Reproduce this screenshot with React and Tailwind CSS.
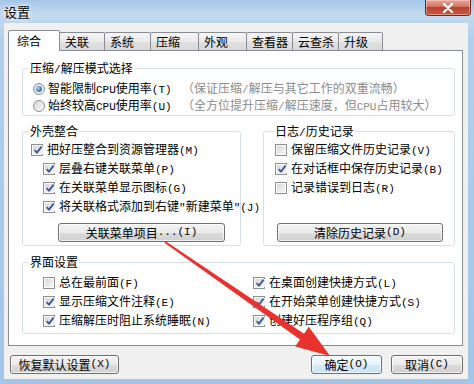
import React from "react";

function T({ text }) {
  const parts = text.split(/([\x21-\x7e]+)/);
  return (
    <>
      {parts.map((p, i) =>
        /^[\x21-\x7e]+$/.test(p) ? (
          <span key={i} className="font-['Liberation_Mono',monospace] text-[11px]">
            {p}
          </span>
        ) : (
          <React.Fragment key={i}>{p}</React.Fragment>
        )
      )}
    </>
  );
}

function Check({ checked }) {
  return (
    <span className="w-[12px] h-[12px] shrink-0 border border-[#8e8f8f] bg-white p-px flex">
      <span className="flex-1 flex items-center justify-center bg-[linear-gradient(135deg,#d5d8dd,#f7f7f7)]">
        {checked && (
          <svg width="10" height="10" viewBox="0 0 10 10">
            <path d="M1.6 5.2 L4 7.6 L8.6 1.6" stroke="#3d5a95" strokeWidth="1.9" fill="none" />
          </svg>
        )}
      </span>
    </span>
  );
}

function Radio({ checked }) {
  return (
    <span className="w-[12px] h-[12px] shrink-0 rounded-full border border-[#8e8f8f] bg-[linear-gradient(135deg,#d3d6db,#fafafa)] flex items-center justify-center">
      {checked && (
        <span className="w-[6px] h-[6px] rounded-full bg-[radial-gradient(circle_at_35%_35%,#a9d6f7,#2a6cae_70%)]" />
      )}
    </span>
  );
}

function Btn({ children, className = "", def = false }) {
  return (
    <div
      className={
        "h-[19px] rounded-[3px] border flex items-center justify-center text-[12px] leading-none shadow-[inset_0_0_0_1px_rgba(255,255,255,0.7)] " +
        (def
          ? "border-[#3c7fb1] bg-[linear-gradient(#f4fafe,#e6f3fb_50%,#d5ebf8_50%,#c6e3f5)] "
          : "border-[#707070] bg-[linear-gradient(#f2f2f2,#ebebeb_50%,#dddddd_50%,#cfcfcf)] ") +
        className
      }
    >
      {children}
    </div>
  );
}

function Row({ checked, text, indent = "" }) {
  return (
    <div className={"flex items-center h-[19px] " + indent}>
      <Check checked={checked} />
      <span className="ml-[4px] whitespace-nowrap">
        <T text={text} />
      </span>
    </div>
  );
}

function Group({ title, titleLeft, className, children }) {
  return (
    <div className={"relative border border-[#d5dfe5] rounded-[3px] " + className}>
      <span className={"absolute -top-[8px] px-px bg-white leading-[14px] whitespace-nowrap " + titleLeft}>
        <T text={title} />
      </span>
      {children}
    </div>
  );
}

export default function App() {
  const tabs = [
    ["关联", "w-[46px]"],
    ["系统", "w-[47px]"],
    ["压缩", "w-[49px]"],
    ["外观", "w-[49px]"],
    ["查看器", "w-[47px]"],
    ["云查杀", "w-[47px]"],
    ["升级", "w-[45px]"],
  ];
  return (
    <div className="relative w-[474px] h-[384px] overflow-hidden flex flex-col bg-[linear-gradient(180deg,#a3c6e8,#c2d9ef_14px,#b3cfea_40px,#a5c5e5)] font-['Noto_Sans_CJK_SC','Noto_Sans',sans-serif] text-[12px] text-black">
      {/* title bar */}
      <div className="h-[23px] flex items-start justify-between shrink-0">
        <span className="pl-[4px] pt-[3px] text-[13px] leading-[17px] [text-shadow:0_0_6px_#fff,0_0_3px_#fff]">设置</span>
        <div className="mr-[3px] w-[46px] h-[16px] rounded-b-[4px] border border-t-0 border-[#6d2a22] bg-[linear-gradient(#e9a99c,#d0705f_45%,#b8402f_50%,#c85a43)] flex items-center justify-center shadow-[inset_0_0_0_1px_rgba(255,210,200,0.5)]">
          <svg width="12" height="10" viewBox="0 0 12 10">
            <path d="M2 1 L10 9 M10 1 L2 9" stroke="#fff" strokeWidth="2.4" strokeLinecap="round" />
          </svg>
        </div>
      </div>

      {/* client */}
      <div className="ml-[4px] mr-[6px] h-[356px] bg-[#f0f0f0] flex flex-col pt-[7px] pl-[4px] pr-[5px]">
        {/* tabs */}
        <div className="flex items-end -mb-px relative z-10">
          <div className="w-[52px] h-[21px] bg-white border border-b-0 border-[#898c95] rounded-t-[2px] pl-[8px] pt-[1px] leading-[17px]">
            综合
          </div>
          {tabs.map(([label, w], i) => (
            <div
              key={i}
              className={
                w +
                " h-[19px] -ml-px border border-[#898c95] rounded-t-[2px] bg-[linear-gradient(#f6f6f6,#e9e9e9_50%,#e0e0e0_50%,#d9d9d9)] pl-[5px] leading-[17px] first:ml-0"
              }
            >
              {label}
            </div>
          ))}
        </div>

        {/* panel */}
        <div className="h-[296px] border border-[#898c95] bg-white flex flex-col pt-[17px] pl-[13px] pr-[7px]">
          <Group title="压缩/解压模式选择" titleLeft="left-[6px]" className="w-[433px] h-[48px] pt-[11px] pl-[10px]">
            <div className="flex items-center h-[17px]">
              <Radio checked />
              <span className="ml-[3px] w-[134px] whitespace-nowrap">
                <T text="智能限制CPU使用率(T)" />
              </span>
              <span className="text-[#8c8c8c] whitespace-nowrap">
                <T text="（保证压缩/解压与其它工作的双重流畅）" />
              </span>
            </div>
            <div className="flex items-center h-[17px]">
              <Radio />
              <span className="ml-[3px] w-[134px] whitespace-nowrap">
                <T text="始终较高CPU使用率(U)" />
              </span>
              <span className="text-[#8c8c8c] whitespace-nowrap">
                <T text="（全方位提升压缩/解压速度，但CPU占用较大）" />
              </span>
            </div>
          </Group>

          <div className="flex mt-[15px] gap-[22px]">
            <Group title="外壳整合" titleLeft="left-[6px]" className="w-[219px] h-[115px] pt-[8px] pl-[8px]">
              <Row checked text="把好压整合到资源管理器(M)" />
              <Row checked text="层叠右键关联菜单(P)" indent="pl-[12px]" />
              <Row checked text="在关联菜单显示图标(G)" indent="pl-[12px]" />
              <Row checked text={'将关联格式添加到右键"新建菜单"(J)'} indent="pl-[12px]" />
              <Btn className="mt-[7px] ml-[27px] w-[167px]">
                <T text="关联菜单项目...(I)" />
              </Btn>
            </Group>
            <Group title="日志/历史记录" titleLeft="left-[10px]" className="w-[192px] h-[115px] pt-[8px] pl-[11px]">
              <Row text="保留压缩文件历史记录(V)" />
              <Row checked text="在对话框中保存历史记录(B)" />
              <Row text="记录错误到日志(R)" />
              <Btn className="mt-[26px] ml-[2px] w-[166px]">
                <T text="清除历史记录(D)" />
              </Btn>
            </Group>
          </div>

          <Group title="界面设置" titleLeft="left-[6px]" className="mt-[16px] w-[433px] h-[72px] pt-[10px] pl-[20px] flex">
            <div className="w-[210px] flex flex-col">
              <Row text="总在最前面(F)" />
              <Row checked text="显示压缩文件注释(E)" />
              <Row checked text="压缩解压时阻止系统睡眠(N)" />
            </div>
            <div className="flex flex-col">
              <Row checked text="在桌面创建快捷方式(L)" />
              <Row checked text="在开始菜单创建快捷方式(S)" />
              <Row checked text="创建好压程序组(Q)" />
            </div>
          </Group>
        </div>

        {/* bottom buttons */}
        <div className="mt-[9px] pl-[2px] flex">
          <Btn className="w-[109px]">
            <T text="恢复默认设置(X)" />
          </Btn>
          <Btn def className="ml-auto w-[71px]">
            <T text="确定(O)" />
          </Btn>
          <Btn className="ml-[9px] w-[72px]">
            <T text="取消(C)" />
          </Btn>
        </div>
      </div>

      {/* red arrow annotation */}
      <svg className="absolute inset-0 pointer-events-none" width="474" height="384" viewBox="0 0 474 384">
        <polygon
          points="165.6,241.2 304,333.8 308.8,326.8 330,356 295.2,346.6 300,339.6 164.4,242.8"
          fill="#e8322d"
        />
      </svg>
    </div>
  );
}
